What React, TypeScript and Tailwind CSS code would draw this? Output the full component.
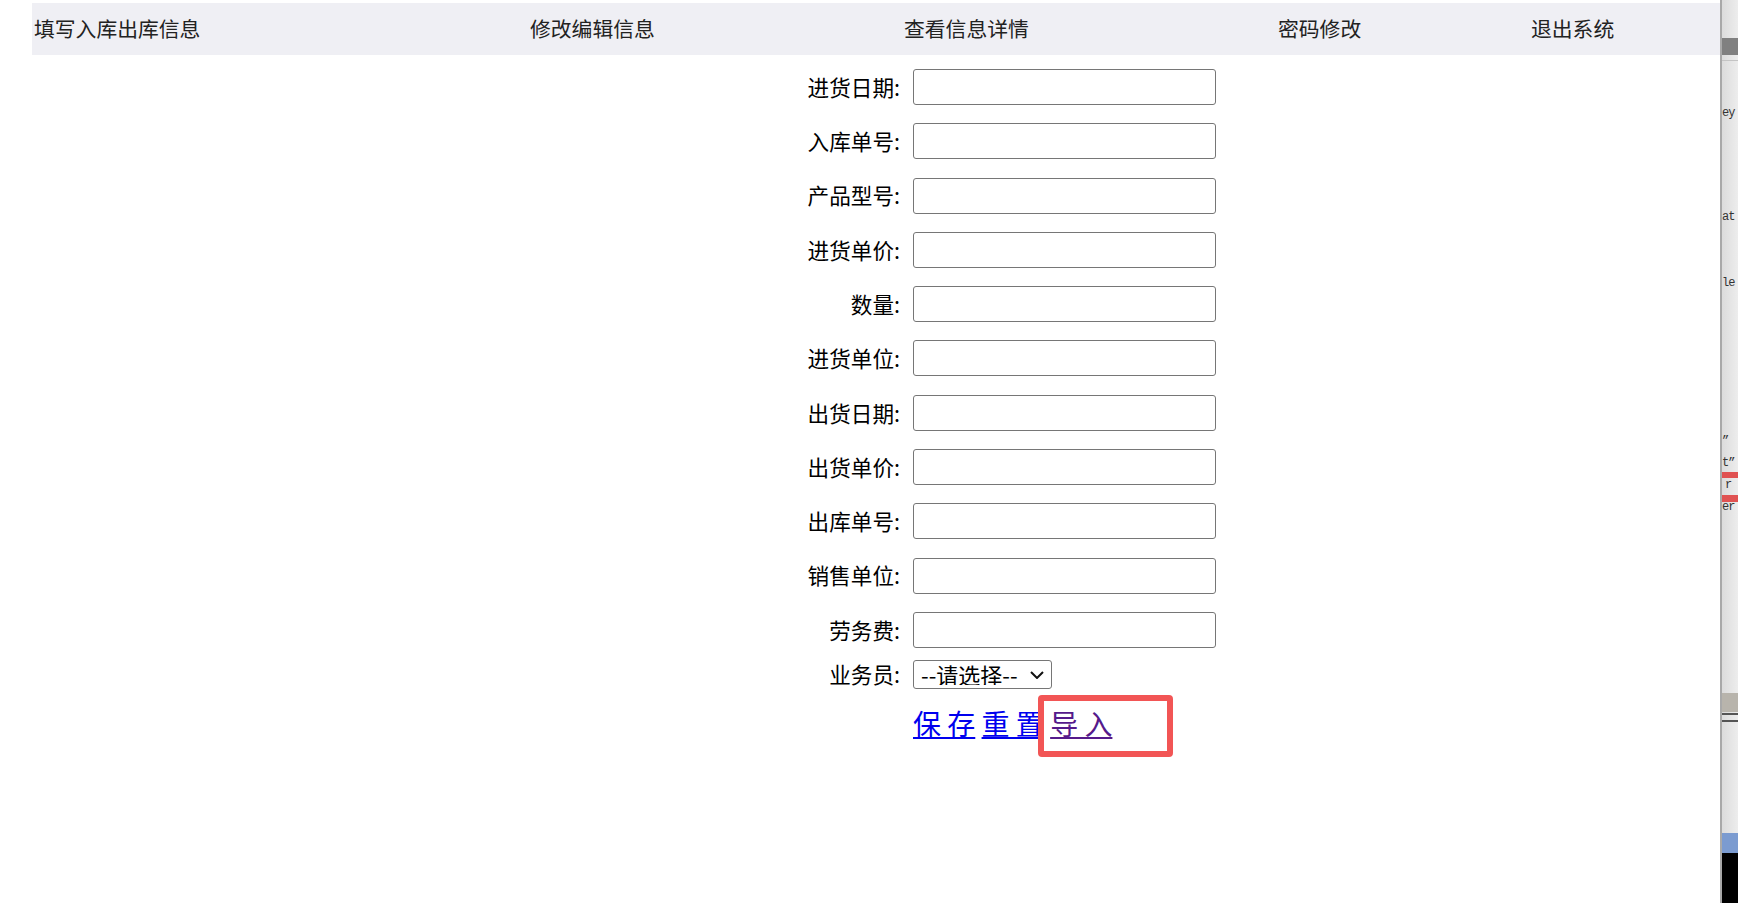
import React from "react";

const cjk = { fontFamily: '"Noto Sans CJK SC", "Noto Sans", sans-serif' };

const navItems = [
  { label: "填写入库出库信息", w: "w-[496px]" },
  { label: "修改编辑信息", w: "w-[374px]" },
  { label: "查看信息详情", w: "w-[374px]" },
  { label: "密码修改", w: "w-[253px]" },
  { label: "退出系统", w: "flex-1" },
];

const fields = [
  "进货日期",
  "入库单号",
  "产品型号",
  "进货单价",
  "数量",
  "进货单位",
  "出货日期",
  "出货单价",
  "出库单号",
  "销售单位",
  "劳务费",
];

function EditorEdge() {
  // slice of another window peeking in on the right
  return (
    <div className="flex w-[18px] shrink-0 flex-col overflow-hidden border-l-2 border-[#a9a9a9] bg-gradient-to-r from-[#dcdcdc] to-[#ededed] font-['Liberation_Mono',monospace] text-[12px] leading-[15px] tracking-[-1px] text-[#333]">
      <div className="mt-[38px] h-[17px] bg-[#808080]" />
      <div className="mt-[5px] h-px bg-[#c4c4c4]" />
      <span className="mt-[45px] h-[15px]">ey</span>
      <span className="mt-[89px] h-[15px]">at</span>
      <span className="mt-[51px] h-[15px]">le</span>
      <span className="mt-[143px] h-[15px]">”</span>
      <span className="mt-[7px] h-[15px]">t”</span>
      <div className="mt-px h-[6px] bg-[#e05252]" />
      <span className="h-[17px] pl-[3px]">r</span>
      <div className="h-[7px] bg-[#e05252]" />
      <span className="h-[12px] leading-[10px]">er</span>
      <div className="mt-[179px] h-[19px] bg-[#b8b4ac]" />
      <div className="mt-px h-[2px] bg-[#555]" />
      <div className="mt-[5px] h-[2px] bg-[#555]" />
      <div className="mt-[111px] h-[20px] bg-[#7b9bd0]" />
      <div className="flex-1 bg-black" />
    </div>
  );
}

export default function App() {
  return (
    <div className="relative flex h-[903px] w-[1738px] overflow-hidden bg-white text-black" style={cjk}>
      <div className="flex-1">
        {/* nav bar */}
        <div className="ml-[32px] mt-[3px] flex h-[52px] items-center bg-[#efeff4] pl-[2px] text-[20.8px] text-[#222]">
          {navItems.map((n) => (
            <span key={n.label} className={n.w}>{n.label}</span>
          ))}
        </div>

        {/* form */}
        <div className="ml-[790px] mt-[14px] flex flex-col gap-[18.3px]">
          {fields.map((f) => (
            <div key={f} className="flex h-[36px] items-center">
              <label className="w-[110px] text-right text-[21.6px]">{f}:</label>
              <input
                type="text"
                className="ml-[13px] h-[36px] w-[303px] rounded-[3px] border border-[#767676] bg-white px-2 text-[18px] outline-none"
              />
            </div>
          ))}
        </div>

        <div className="ml-[790px] mt-[12px] flex h-[29px] items-center">
          <label className="w-[110px] text-right text-[21.6px]">业务员:</label>
          <div className="relative ml-[13px]">
            <select className="h-[29px] w-[139px] appearance-none rounded-[3px] border border-[#767676] bg-white pl-[7px] text-[22px] leading-none text-black">
              <option>--请选择--</option>
            </select>
            <svg className="pointer-events-none absolute right-[8px] top-[11px]" width="14" height="8" viewBox="0 0 14 8">
              <path d="M1 1l6 6 6-6" fill="none" stroke="#111" strokeWidth="2" />
            </svg>
          </div>
        </div>

        <div className="ml-[913px] mt-[16px] text-[28px] leading-[36px]">
          <a href="#" className="text-[#0000ee] underline">保 存</a>{" "}
          <a href="#" className="text-[#0000ee] underline">重 置</a>{" "}
          <a href="#" className="text-[#551a8b] underline">导 入</a>
        </div>
      </div>

      <EditorEdge />

      {/* annotation box */}
      <div className="absolute left-[1038px] top-[695px] h-[62px] w-[135px] rounded-[4px] border-[6px] border-[#f25555]" />
    </div>
  );
}
